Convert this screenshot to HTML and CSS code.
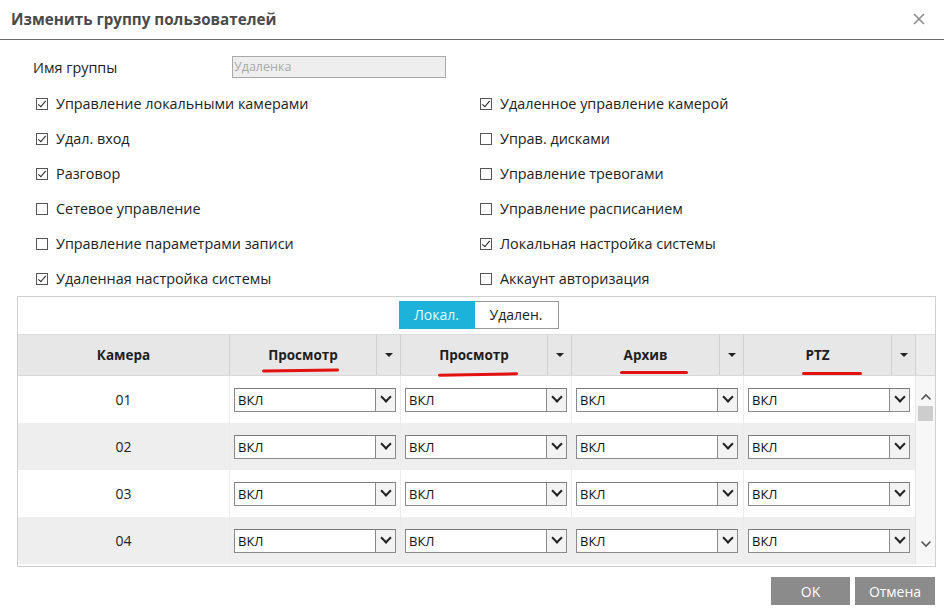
FILE: index.html
```html
<!DOCTYPE html>
<html lang="ru">
<head>
<meta charset="utf-8">
<title>Изменить группу пользователей</title>
<link rel="stylesheet" href="styles.css">
</head>
<body>
<div class="dialog">
  <div class="titlebar">
    <span class="title">Изменить группу пользователей</span>
    <svg class="close" width="12" height="12" viewBox="0 0 12 12"><path d="M1 1L11 11M11 1L1 11" stroke="#8a8a8a" stroke-width="1.5" fill="none"/></svg>
  </div>
  <div class="content">
    <div class="group-row">
      <span class="group-label">Имя группы</span>
      <div class="group-input">Удаленка</div>
    </div>
    <div class="perms">
      <div class="perm"><span class="cb on"></span>Управление локальными камерами</div>
      <div class="perm"><span class="cb on"></span>Удаленное управление камерой</div>
      <div class="perm"><span class="cb on"></span>Удал. вход</div>
      <div class="perm"><span class="cb"></span>Управ. дисками</div>
      <div class="perm"><span class="cb on"></span>Разговор</div>
      <div class="perm"><span class="cb"></span>Управление тревогами</div>
      <div class="perm"><span class="cb"></span>Сетевое управление</div>
      <div class="perm"><span class="cb"></span>Управление расписанием</div>
      <div class="perm"><span class="cb"></span>Управление параметрами записи</div>
      <div class="perm"><span class="cb on"></span>Локальная настройка системы</div>
      <div class="perm"><span class="cb on"></span>Удаленная настройка системы</div>
      <div class="perm"><span class="cb"></span>Аккаунт авторизация</div>
    </div>
    <div class="table-box">
      <div class="tabs">
        <div class="tab active">Локал.</div>
        <div class="tab">Удален.</div>
      </div>
      <div class="grid-head">
        <div class="hcell first"><span class="hlabel">Камера</span></div>
        <div class="hcell"><span class="hlabel"><span class="mark m1">Просмотр</span></span><span class="harrow"></span></div>
        <div class="hcell"><span class="hlabel"><span class="mark m2">Просмотр</span></span><span class="harrow"></span></div>
        <div class="hcell"><span class="hlabel"><span class="mark m3">Архив</span></span><span class="harrow"></span></div>
        <div class="hcell"><span class="hlabel"><span class="mark m4">PTZ</span></span><span class="harrow"></span></div>
        <div class="hcell sbhead"></div>
      </div>
      <div class="grid-body">
        <div class="rows">
          <div class="row">
            <div class="cell num">01</div>
            <div class="cell"><div class="sel"><span class="sel-text">ВКЛ</span><span class="sel-btn"></span></div></div>
            <div class="cell"><div class="sel"><span class="sel-text">ВКЛ</span><span class="sel-btn"></span></div></div>
            <div class="cell"><div class="sel"><span class="sel-text">ВКЛ</span><span class="sel-btn"></span></div></div>
            <div class="cell"><div class="sel"><span class="sel-text">ВКЛ</span><span class="sel-btn"></span></div></div>
          </div>
          <div class="row alt">
            <div class="cell num">02</div>
            <div class="cell"><div class="sel"><span class="sel-text">ВКЛ</span><span class="sel-btn"></span></div></div>
            <div class="cell"><div class="sel"><span class="sel-text">ВКЛ</span><span class="sel-btn"></span></div></div>
            <div class="cell"><div class="sel"><span class="sel-text">ВКЛ</span><span class="sel-btn"></span></div></div>
            <div class="cell"><div class="sel"><span class="sel-text">ВКЛ</span><span class="sel-btn"></span></div></div>
          </div>
          <div class="row">
            <div class="cell num">03</div>
            <div class="cell"><div class="sel"><span class="sel-text">ВКЛ</span><span class="sel-btn"></span></div></div>
            <div class="cell"><div class="sel"><span class="sel-text">ВКЛ</span><span class="sel-btn"></span></div></div>
            <div class="cell"><div class="sel"><span class="sel-text">ВКЛ</span><span class="sel-btn"></span></div></div>
            <div class="cell"><div class="sel"><span class="sel-text">ВКЛ</span><span class="sel-btn"></span></div></div>
          </div>
          <div class="row alt">
            <div class="cell num">04</div>
            <div class="cell"><div class="sel"><span class="sel-text">ВКЛ</span><span class="sel-btn"></span></div></div>
            <div class="cell"><div class="sel"><span class="sel-text">ВКЛ</span><span class="sel-btn"></span></div></div>
            <div class="cell"><div class="sel"><span class="sel-text">ВКЛ</span><span class="sel-btn"></span></div></div>
            <div class="cell"><div class="sel"><span class="sel-text">ВКЛ</span><span class="sel-btn"></span></div></div>
          </div>
        </div>
        <div class="scrollbar">
          <svg class="sb-arrow" width="12" height="8" viewBox="0 0 12 8"><path d="M1.5 6.5L6 2L10.5 6.5" stroke="#555" stroke-width="1.6" fill="none"/></svg>
          <div class="sb-thumb"></div>
          <div class="sb-track"></div>
          <svg class="sb-arrow" width="12" height="8" viewBox="0 0 12 8"><path d="M1.5 1.5L6 6L10.5 1.5" stroke="#555" stroke-width="1.6" fill="none"/></svg>
        </div>
      </div>
    </div>
    <div class="footer">
      <button class="btn">OK</button>
      <button class="btn">Отмена</button>
    </div>
  </div>
</div>
</body>
</html>
```

FILE: styles.css
```css
* { box-sizing: border-box; }
html, body { margin: 0; padding: 0; background: #fff; }
body {
  font-family: "Open Sans", "Noto Sans", "DejaVu Sans", sans-serif;
  color: #222;
  width: 944px;
  height: 616px;
  overflow: hidden;
}
.dialog { width: 944px; height: 616px; background: #fff; }

.titlebar {
  height: 40px;
  border-bottom: 1px solid #6b6b6b;
  display: flex;
  align-items: center;
  justify-content: space-between;
  padding: 0 19px 2px 11px;
}
.title {
  font-size: 15.2px;
  font-weight: 700;
  color: #4a4a4a;
}
.close { display: block; }

.content { padding: 0 9px 0 0; }

.group-row {
  display: flex;
  align-items: center;
  margin-top: 16px;
  height: 22px;
}
.group-label {
  font-size: 14.4px;
  width: 232px;
  padding-left: 33px;
}
.group-input {
  width: 214px;
  height: 22px;
  border: 1px solid #a9a9a9;
  background: #eeeeee;
  color: #a8a8a8;
  font-size: 12.5px;
  line-height: 20px;
  padding-left: 1px;
}

.perms {
  margin-top: 8px;
  padding-left: 36px;
  display: grid;
  grid-template-columns: 444px 1fr;
  grid-auto-rows: 35px;
}
.perm {
  display: flex;
  align-items: center;
  font-size: 14.4px;
  color: #222;
  white-space: nowrap;
}
.cb {
  width: 12px;
  height: 12px;
  border: 1px solid #555;
  margin-right: 8px;
  position: relative;
  flex: none;
  background: #fff;
}
.cb.on::after {
  content: "";
  position: absolute;
  left: 3px;
  top: 0px;
  width: 3px;
  height: 7px;
  border-right: 1.5px solid #222;
  border-bottom: 1.5px solid #222;
  transform: rotate(40deg);
}

.table-box {
  margin-left: 17px;
  width: 919px;
  border: 1px solid #cfcfcf;
  height: 271px;
}
.tabs {
  display: flex;
  justify-content: center;
  padding: 4px 0 5px 4px;
}
.tab {
  height: 28px;
  line-height: 26px;
  font-size: 14px;
  border: 1px solid #9a9a9a;
  color: #222;
  background: #fff;
  text-align: center;
}
.tab.active {
  background: #1cb2d9;
  border-color: #1cb2d9;
  color: #eaf8fc;
  width: 76px;
}
.tab + .tab { border-left: none; width: 84px; }

.grid-head {
  display: grid;
  grid-template-columns: 211px 171px 171px 172px 172px 20px;
  height: 42px;
  background: #e7e7e7;
  border-top: 1px solid #dcdcdc;
  border-bottom: 1px solid #d8d8d8;
}
.hcell {
  display: flex;
  align-items: stretch;
  border-left: 1px solid #d0d0d0;
}
.hcell.first { border-left: none; }
.hlabel {
  flex: 1;
  display: flex;
  align-items: center;
  justify-content: center;
  font-size: 13.5px;
  font-weight: 700;
  color: #1e1e1e;
}
.harrow {
  width: 24px;
  border-left: 1px solid #d0d0d0;
  position: relative;
}
.harrow::after {
  content: "";
  position: absolute;
  left: 8px;
  top: 18px;
  border-left: 4px solid transparent;
  border-right: 4px solid transparent;
  border-top: 4px solid #222;
}
.sbhead { background: #ececec; }

.mark { position: relative; }
.mark::after {
  content: "";
  position: absolute;
  height: 3px;
  background: #e31010;
  border-radius: 2px;
}
.m1::after { left: -6px; width: 77px; top: 23px; transform: rotate(-0.8deg); }
.m2::after { left: -1px; width: 80px; top: 27px; transform: rotate(-1deg); }
.m3::after { left: -4px; width: 68px; top: 25px; }
.m4::after { left: -3px; width: 60px; top: 26px; }

.grid-body {
  display: flex;
  height: 188px;
}
.rows { width: 897px; }
.row {
  display: grid;
  grid-template-columns: 211px 171px 171px 172px 172px;
  height: 47px;
  background: #fff;
}
.row.alt { background: #eeeeee; }
.cell {
  display: flex;
  align-items: center;
  padding-left: 4px;
  border-left: 1px solid #ececec;
}
.cell.num {
  justify-content: center;
  border-left: none;
  padding-left: 0;
  font-size: 14px;
  color: #222;
}
.sel {
  width: 162px;
  height: 24px;
  border: 1px solid #8a8a8a;
  border-top-color: #7a7a7a;
  background: #fff;
  display: flex;
  align-items: stretch;
}
.sel-text {
  flex: 1;
  font-size: 13px;
  line-height: 22px;
  padding-left: 3px;
  color: #111;
}
.sel-btn {
  width: 20px;
  border-left: 1px solid #8a8a8a;
  background: #f3f3f3;
  position: relative;
}
.sel-btn::after {
  content: "";
  position: absolute;
  left: 6px;
  top: 4px;
  width: 6px;
  height: 6px;
  border-right: 2px solid #222;
  border-bottom: 2px solid #222;
  transform: rotate(45deg);
}

.scrollbar {
  width: 20px;
  background: #f7f7f7;
  border-left: 1px solid #e6e6e6;
  display: flex;
  flex-direction: column;
  align-items: center;
  padding: 17px 0 16px 0;
}
.sb-arrow { display: block; flex: none; }
.sb-thumb {
  width: 15px;
  height: 15px;
  background: #cdcdcd;
  margin-top: 5px;
  flex: none;
}
.sb-track { flex: 1; }

.footer {
  display: flex;
  justify-content: flex-end;
  gap: 5px;
  margin-top: 10px;
}
.btn {
  height: 28px;
  width: 79px;
  background: #8b8b8b;
  border: none;
  color: #fff;
  font-family: "Open Sans", "Noto Sans", sans-serif;
  font-size: 14px;
  padding: 0;
}
.btn + .btn { width: 80px; }
```
